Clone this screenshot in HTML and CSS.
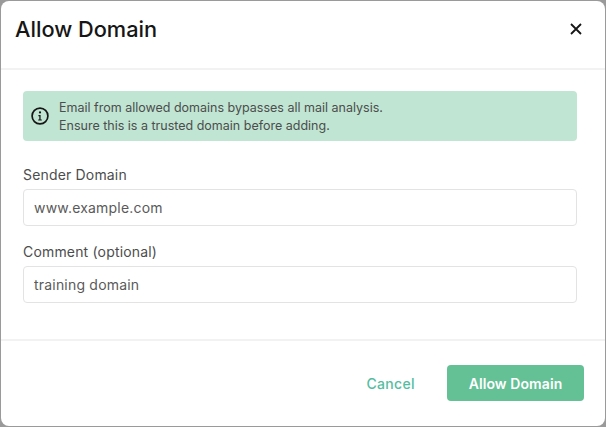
FILE: index.html
```html
<!DOCTYPE html>
<html lang="en">

<head>
    <meta charset="UTF-8">
    <title>Allow Domain</title>
    <link rel="stylesheet" href="styles.css">
</head>

<body>
    <div class="modal">
        <div class="modalHeader">
            <h1>Allow Domain</h1>
            <button class="closeBtn" aria-label="Close">
                <svg width="12" height="12" viewBox="0 0 12 12">
                    <path d="M1 1L11 11M11 1L1 11" fill="none" stroke="#161616" stroke-width="1.8" />
                </svg>
            </button>
        </div>
        <div class="modalBody">
            <div class="alert">
                <svg class="alertIcon" width="20" height="20" viewBox="0 0 20 20">
                    <circle cx="10" cy="10" r="7.9" fill="none" stroke="#161616" stroke-width="1.7" />
                    <circle cx="10" cy="6.4" r="1.1" fill="#161616" />
                    <path d="M8.4 9H10.6V13.4H11.8V14.6H8.2V13.4H9.3V10.2H8.4Z" fill="#161616" />
                </svg>
                <p>Email from allowed domains bypasses all mail analysis.<br>Ensure this is a trusted domain before adding.</p>
            </div>
            <label class="field">
                <span>Sender Domain</span>
                <input type="text" value="www.example.com">
            </label>
            <label class="field">
                <span>Comment (optional)</span>
                <input type="text" value="training domain">
            </label>
        </div>
        <div class="modalFooter">
            <button class="cancelBtn">Cancel</button>
            <button class="allowBtn">Allow Domain</button>
        </div>
    </div>
</body>

</html>
```

FILE: styles.css
```css
* {
  margin: 0;
  padding: 0;
  box-sizing: border-box;
}

html, body {
  height: 100%;
}

body {
  padding: 1px;
  background: #9a9a9a;
  font-family: "Inter", "Liberation Sans", sans-serif;
  color: #4d4d4d;
}

.modal {
  height: 100%;
  display: flex;
  flex-direction: column;
  background: #ffffff;
  border-radius: 8px;
}

.modalHeader {
  height: 69px;
  flex-shrink: 0;
  display: flex;
  align-items: center;
  justify-content: space-between;
  padding: 0 23px 11px 14px;
  border-bottom: 2px solid #f2f2f2;
}

.modalHeader h1 {
  font-size: 21.75px;
  font-weight: 500;
  color: #161616;
}

.closeBtn {
  display: flex;
  border: none;
  background: none;
  cursor: pointer;
}

.modalBody {
  height: 271px;
  flex-shrink: 0;
  padding: 21px 28px 0 22px;
  border-bottom: 2px solid #f2f2f2;
}

.alert {
  height: 50px;
  display: flex;
  align-items: center;
  gap: 9px;
  padding-left: 7px;
  padding-top: 1px;
  margin-bottom: 24.5px;
  background: #c0e5d3;
  border-radius: 4px;
  font-size: 12.5px;
  line-height: 18px;
}

.alertIcon {
  flex-shrink: 0;
  margin-top: -1px;
}

.field {
  display: block;
  margin-bottom: 16.5px;
}

.field span {
  display: block;
  margin-bottom: 6px;
  font-size: 14px;
  line-height: 17px;
  letter-spacing: 0.17px;
}

.field input {
  display: block;
  width: 100%;
  height: 37.5px;
  padding: 0 10px;
  border: 1px solid #e3e3e3;
  border-radius: 4px;
  font-family: inherit;
  font-size: 14px;
  color: #5a5a5a;
  letter-spacing: 0.2px;
}

.modalFooter {
  flex: 1;
  display: flex;
  align-items: flex-start;
  justify-content: flex-end;
  gap: 32px;
  padding: 24px 21px 0 0;
}

.modalFooter button {
  font-family: inherit;
  font-size: 14px;
  font-weight: 600;
  letter-spacing: 0.08px;
  border: none;
  cursor: pointer;
}

.modalFooter .cancelBtn {
  height: 36px;
  background: none;
  color: #55bd9f;
  font-weight: 500;
  letter-spacing: 0.35px;
}

.allowBtn {
  width: 137px;
  height: 36px;
  background: #64c095;
  color: #ffffff;
  border-radius: 4px;
}
```
